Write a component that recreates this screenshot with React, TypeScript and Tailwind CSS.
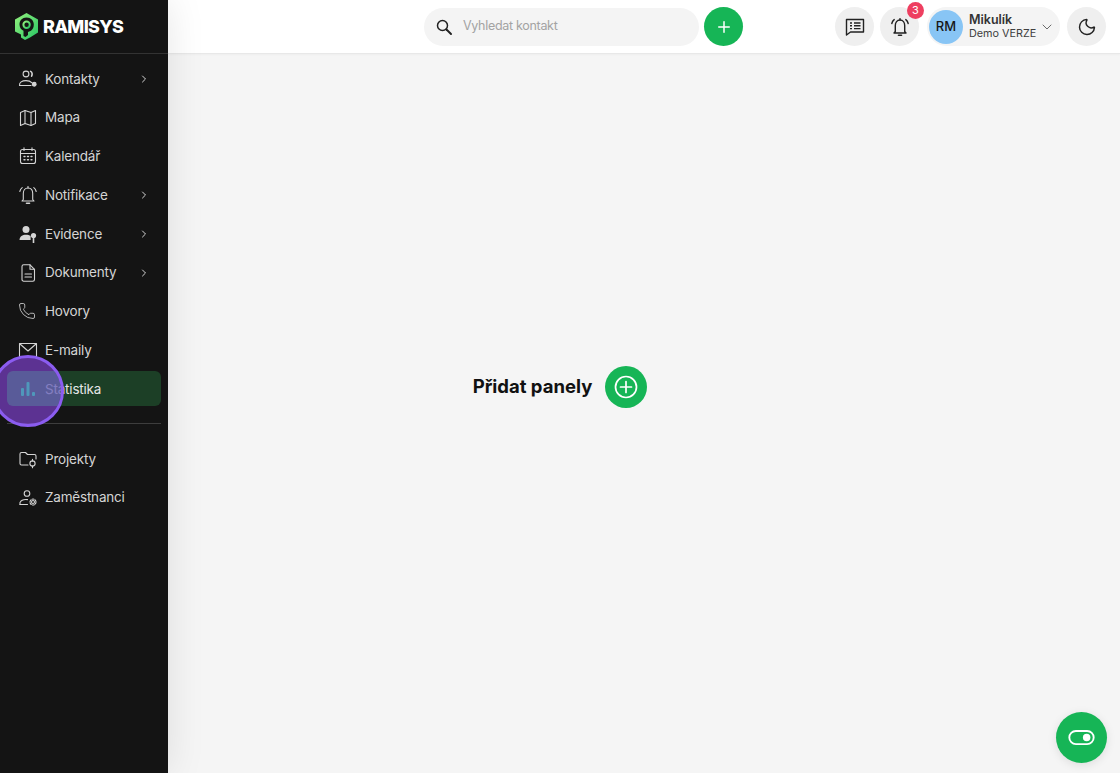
import React from 'react';
import { ChevronDown, ChevronRight, Moon, Phone, Plus } from 'lucide-react';

const font = { fontFamily: 'Inter, sans-serif' };

const IconBase = ({ children, className = 'h-5 w-5', strokeWidth = 1.1 }: { children: React.ReactNode; className?: string; strokeWidth?: number }) => (
  <svg viewBox="0 0 20 20" fill="none" stroke="currentColor" strokeWidth={strokeWidth} strokeLinecap="round" strokeLinejoin="round" className={className}>
    {children}
  </svg>
);

const Logo = () => (
  <svg viewBox="0 0 23 27" className="h-[27px] w-[23px] shrink-0">
    <defs>
      <linearGradient id="logoGrad" x1="0" y1="0" x2="1" y2="1">
        <stop offset="0" stopColor="#96f27e" />
        <stop offset="1" stopColor="#25c463" />
      </linearGradient>
    </defs>
    <path d="M11.5 0 L23 6.5 V19.5 L15 24.5 L10 27 L6 24.5 V21.5 L0 18.5 V6.5 Z" fill="url(#logoGrad)" />
    <path d="M11.5 4.5 C7.2 4.5 4.5 7.6 4.5 11.5 C4.5 14.5 6.2 16.8 8.5 17.8 V23 L10.5 24 L13 22 V19 L16 17.8 C17.8 16.4 18.8 14.2 18.8 11.5 C18.8 7.6 15.8 4.5 11.5 4.5 Z" fill="#141414" />
    <circle cx="11.6" cy="11.8" r="3.2" fill="none" stroke="url(#logoGrad)" strokeWidth="2" />
  </svg>
);

const KontaktyIcon = () => (
  <IconBase>
    <circle cx="8" cy="5" r="2.9" />
    <path d="M1.5 16.5 C1.2 13.5 4 11.6 8 11.6 C10.5 11.6 12.6 12.3 13.7 13.6" />
    <path d="M1.5 16.5 H13" />
    <path d="M12.6 2.4 C14.2 3.2 14.6 5.4 13.6 7.2" strokeWidth="1.6" />
    <circle cx="16.2" cy="15.3" r="1.9" fill="currentColor" />
  </IconBase>
);

const MapaIcon = () => (
  <IconBase>
    <path d="M2.5 4.5 L7 2.5 L13 4.5 L17.5 2.5 V15.5 L13 17.5 L7 15.5 L2.5 17.5 Z" />
    <path d="M7 2.5 V15.5 M13 4.5 V17.5" />
  </IconBase>
);

const KalendarIcon = () => (
  <IconBase>
    <rect x="2.5" y="3.5" width="15" height="14" rx="2" />
    <path d="M2.5 7.5 H17.5 M6 1.8 V4.5 M14 1.8 V4.5" />
    <path d="M6 10.5 H7 M9.5 10.5 H10.5 M13 10.5 H14 M6 13.8 H7 M9.5 13.8 H10.5 M13 13.8 H14" strokeWidth="1.4" />
  </IconBase>
);

const BellRingIcon = ({ className, strokeWidth }: { className?: string; strokeWidth?: number }) => (
  <IconBase className={className} strokeWidth={strokeWidth}>
    <path d="M5.3 14.5 V8.5 C5.3 5.5 7 3 10 3 C13 3 14.7 5.5 14.7 8.5 V14.5 L16 16 H4 Z" />
    <path d="M8.5 18.2 H11.5" strokeWidth="1.6" />
    <path d="M1.8 6.5 C2.2 4.8 3 3.5 4.2 2.6 M18.2 6.5 C17.8 4.8 17 3.5 15.8 2.6" />
    <path d="M10 1.6 V3" />
  </IconBase>
);

const EvidenceIcon = () => (
  <svg viewBox="0 0 20 20" className="h-5 w-5" fill="currentColor">
    <circle cx="8" cy="5.5" r="3.5" />
    <path d="M1.5 16 C1.5 12.5 4.5 10.8 8 10.8 C9.8 10.8 11.4 11.2 12.6 12 V16 Z" />
    <circle cx="15.5" cy="11.5" r="2.6" />
    <rect x="14.7" y="13" width="1.6" height="6" />
  </svg>
);

const DokumentyIcon = () => (
  <IconBase>
    <path d="M4 3.5 C4 2.5 4.7 1.8 5.7 1.8 H12 L16.5 6.3 V16.5 C16.5 17.5 15.8 18.2 14.8 18.2 H5.7 C4.7 18.2 4 17.5 4 16.5 Z" />
    <path d="M12 1.8 V6.3 H16.5 M7 11 H13.5 M7 14 H13.5" />
  </IconBase>
);

const MailIcon = () => (
  <IconBase>
    <rect x="1.5" y="3.5" width="17" height="13" />
    <path d="M2 4 L10 11 L18 4" />
  </IconBase>
);

const ProjektyIcon = () => (
  <IconBase>
    <path d="M10 16 H3.5 C2.5 16 2 15.4 2 14.5 V5 C2 4 2.5 3.5 3.5 3.5 H7.5 L9.5 5.5 H16.5 C17.5 5.5 18 6 18 7 V10" />
    <circle cx="14.5" cy="14.5" r="2.6" />
    <path d="M14.5 10.3 V11.9 M14.5 17.1 V18.7" />
  </IconBase>
);

const ZamestnanciIcon = () => (
  <IconBase>
    <circle cx="9" cy="5.5" r="2.8" />
    <path d="M2 16.5 V14.5 C3 12.5 6 11.2 9.5 11.6" />
    <path d="M2 16.5 H9.5" />
    <circle cx="15" cy="14" r="1.5" />
    <circle cx="15" cy="14" r="3" strokeDasharray="2 1.2" />
  </IconBase>
);

const StatsIcon = () => (
  <svg viewBox="0 0 20 20" className="h-5 w-5" fill="currentColor">
    <rect x="3" y="9" width="3" height="8" rx="1" />
    <rect x="8.5" y="3" width="3" height="14" rx="1" />
    <rect x="14" y="13" width="3" height="4" rx="1" />
  </svg>
);

const NavItem = ({ icon, label, chevron }: { icon: React.ReactNode; label: string; chevron?: boolean }) => (
  <div className="flex h-[35px] items-center rounded-md pl-[11px] pr-[11px] text-[#d4d4d4]">
    <span className="flex w-[27px] shrink-0 items-center text-[#d4d4d4]">{icon}</span>
    <span className="text-[13.5px] font-normal tracking-[-0.2px]">{label}</span>
    {chevron && <ChevronRight className="ml-auto h-3 w-3 text-[#d4d4d4]" />}
  </div>
);

const App = () => {
  return (
    <div className="flex h-[773px] w-[1120px] overflow-hidden bg-[#f5f5f5]" style={font}>
      <aside className="relative z-10 flex w-[168px] shrink-0 flex-col bg-[#141414] shadow-[0_0_36px_rgba(0,0,0,0.1)]">
        <div className="flex h-[54px] shrink-0 items-center gap-[5px] border-b border-[#333333] pl-[15px]">
          <Logo />
          <span className="text-[18px] font-extrabold tracking-[-0.7px] text-white">RAMISYS</span>
        </div>
        <nav className="flex flex-col gap-[3.75px] px-[7px] pt-[7.25px]">
          <NavItem icon={<KontaktyIcon />} label="Kontakty" chevron />
          <NavItem icon={<MapaIcon />} label="Mapa" />
          <NavItem icon={<KalendarIcon />} label="Kalendář" />
          <NavItem icon={<BellRingIcon className="h-5 w-5" />} label="Notifikace" chevron />
          <NavItem icon={<EvidenceIcon />} label="Evidence" chevron />
          <NavItem icon={<DokumentyIcon />} label="Dokumenty" chevron />
          <NavItem icon={<Phone className="h-[18px] w-[18px]" strokeWidth={1.1} />} label="Hovory" />
          <NavItem icon={<MailIcon />} label="E-maily" />
          <div className="flex h-[35px] items-center rounded-md bg-[#1c3f26] pl-[11px] pr-[11px] text-[#e5e5e5]">
            <span className="relative z-10 flex w-[27px] shrink-0 items-center text-[#4f98bb]">
              <StatsIcon />
            </span>
            <span className="text-[13.5px] font-normal tracking-[-0.2px]">Statistika</span>
          </div>
        </nav>
        <div className="mx-[7px] mt-[16.75px] border-t border-[#3d3d3d]" />
        <div className="flex flex-col gap-[3.75px] px-[7px] pt-[17.25px]">
          <NavItem icon={<ProjektyIcon />} label="Projekty" />
          <NavItem icon={<ZamestnanciIcon />} label="Zaměstnanci" />
        </div>
        {/* click highlight from the recording */}
        <div className="absolute left-[-8px] top-[355px] h-[72px] w-[72px] overflow-hidden rounded-full border-[3px] border-[#8b5cf0] bg-[#7a3fc8]/70">
          <div className="absolute left-[12px] top-[13px] h-[35px] w-[60px] rounded-l-md bg-[#4ea0a0]/30" />
        </div>
      </aside>

      <div className="relative flex min-w-0 flex-1 flex-col">
        <header className="flex h-[54px] shrink-0 items-center border-b border-[#e8e8e8] bg-white pl-[256px] pr-[13px] shadow-[0_1px_2px_rgba(0,0,0,0.03)]">
          <div className="flex h-[38px] w-[275px] items-center rounded-full bg-[#f4f4f4] pl-[11px]">
            <svg viewBox="0 0 18 18" fill="none" stroke="#222222" strokeLinecap="round" className="h-[18px] w-[18px]">
              <circle cx="7.5" cy="7.5" r="5" strokeWidth="1.5" />
              <path d="M11.5 11.5 L16 16" strokeWidth="2" />
            </svg>
            <span className="ml-[10px] text-[12.5px] tracking-[-0.3px] text-[#a3a3a3]">Vyhledat kontakt</span>
          </div>
          <button className="ml-[5px] flex h-[39px] w-[39px] items-center justify-center rounded-full bg-[#16b556] text-white">
            <Plus className="h-[18px] w-[18px]" strokeWidth={2} />
          </button>
          <button className="ml-[92px] flex h-[39px] w-[39px] items-center justify-center rounded-full bg-[#efefef] text-[#222222]">
            <svg viewBox="0 0 20 20" fill="none" stroke="currentColor" strokeWidth="1.4" strokeLinejoin="round" className="h-[20px] w-[20px]">
              <path d="M1.5 2.5 H18.5 V15 H5.5 L1.5 18 Z" />
              <path d="M5 6 H7 M9 6 H15.5 M5 8.8 H7 M9 8.8 H15.5 M5 11.6 H7 M9 11.6 H15.5" />
            </svg>
          </button>
          <div className="relative ml-[6px] flex h-[39px] w-[39px] items-center justify-center rounded-full bg-[#efefef] text-[#222222]">
            <BellRingIcon className="h-[20px] w-[20px]" strokeWidth={1.4} />
            <span className="absolute left-[27px] top-[-5px] flex h-[17px] w-[17px] items-center justify-center rounded-full bg-[#ee3f60] text-[11px] text-white">3</span>
          </div>
          <div className="ml-[8px] flex h-[39px] w-[133px] items-center rounded-full bg-[#f4f4f4] pl-[2px]">
            <span className="flex h-[34px] w-[34px] items-center justify-center rounded-full bg-[#88c5f5] text-[13px] font-medium text-[#171717]">RM</span>
            <div className="ml-[6px] flex flex-col">
              <span className="text-[12.5px] font-semibold leading-[15px] text-[#333333]">Mikulík</span>
              <span className="text-[10.8px] leading-[14px] text-[#404040]">Demo VERZE</span>
            </div>
            <ChevronDown className="ml-[3px] h-[16px] w-[16px] text-[#555555]" strokeWidth={1.3} />
          </div>
          <button className="ml-[7px] flex h-[39px] w-[39px] items-center justify-center rounded-full bg-[#efefef] text-[#222222]">
            <Moon className="h-[20px] w-[20px]" strokeWidth={1.7} />
          </button>
        </header>

        <main className="flex flex-1 items-center justify-center pb-[53px] pr-[168px]">
          <div className="flex items-center gap-[13px]">
            <span className="text-[18.5px] font-bold text-[#111111]">Přidat panely</span>
            <button className="flex h-[42px] w-[42px] items-center justify-center rounded-full bg-[#16b556] text-white">
              <svg viewBox="0 0 24 24" fill="none" stroke="currentColor" strokeWidth="1.7" strokeLinecap="round" className="h-[24px] w-[24px]">
                <circle cx="12" cy="12" r="10.5" />
                <path d="M12 6.5 V17.5 M6.5 12 H17.5" />
              </svg>
            </button>
          </div>
        </main>

        <button className="absolute bottom-[10px] right-[13px] flex h-[51px] w-[51px] items-center justify-center rounded-full bg-[#16b556] text-white shadow-[0_2px_10px_rgba(0,0,0,0.1)]">
          <svg viewBox="0 0 28 16" fill="none" className="h-[15px] w-[27px]">
            <rect x="1" y="1" width="26" height="14" rx="7" stroke="currentColor" strokeWidth="2" />
            <circle cx="19.5" cy="8" r="4" fill="currentColor" />
          </svg>
        </button>
      </div>
    </div>
  );
};

export default App;
